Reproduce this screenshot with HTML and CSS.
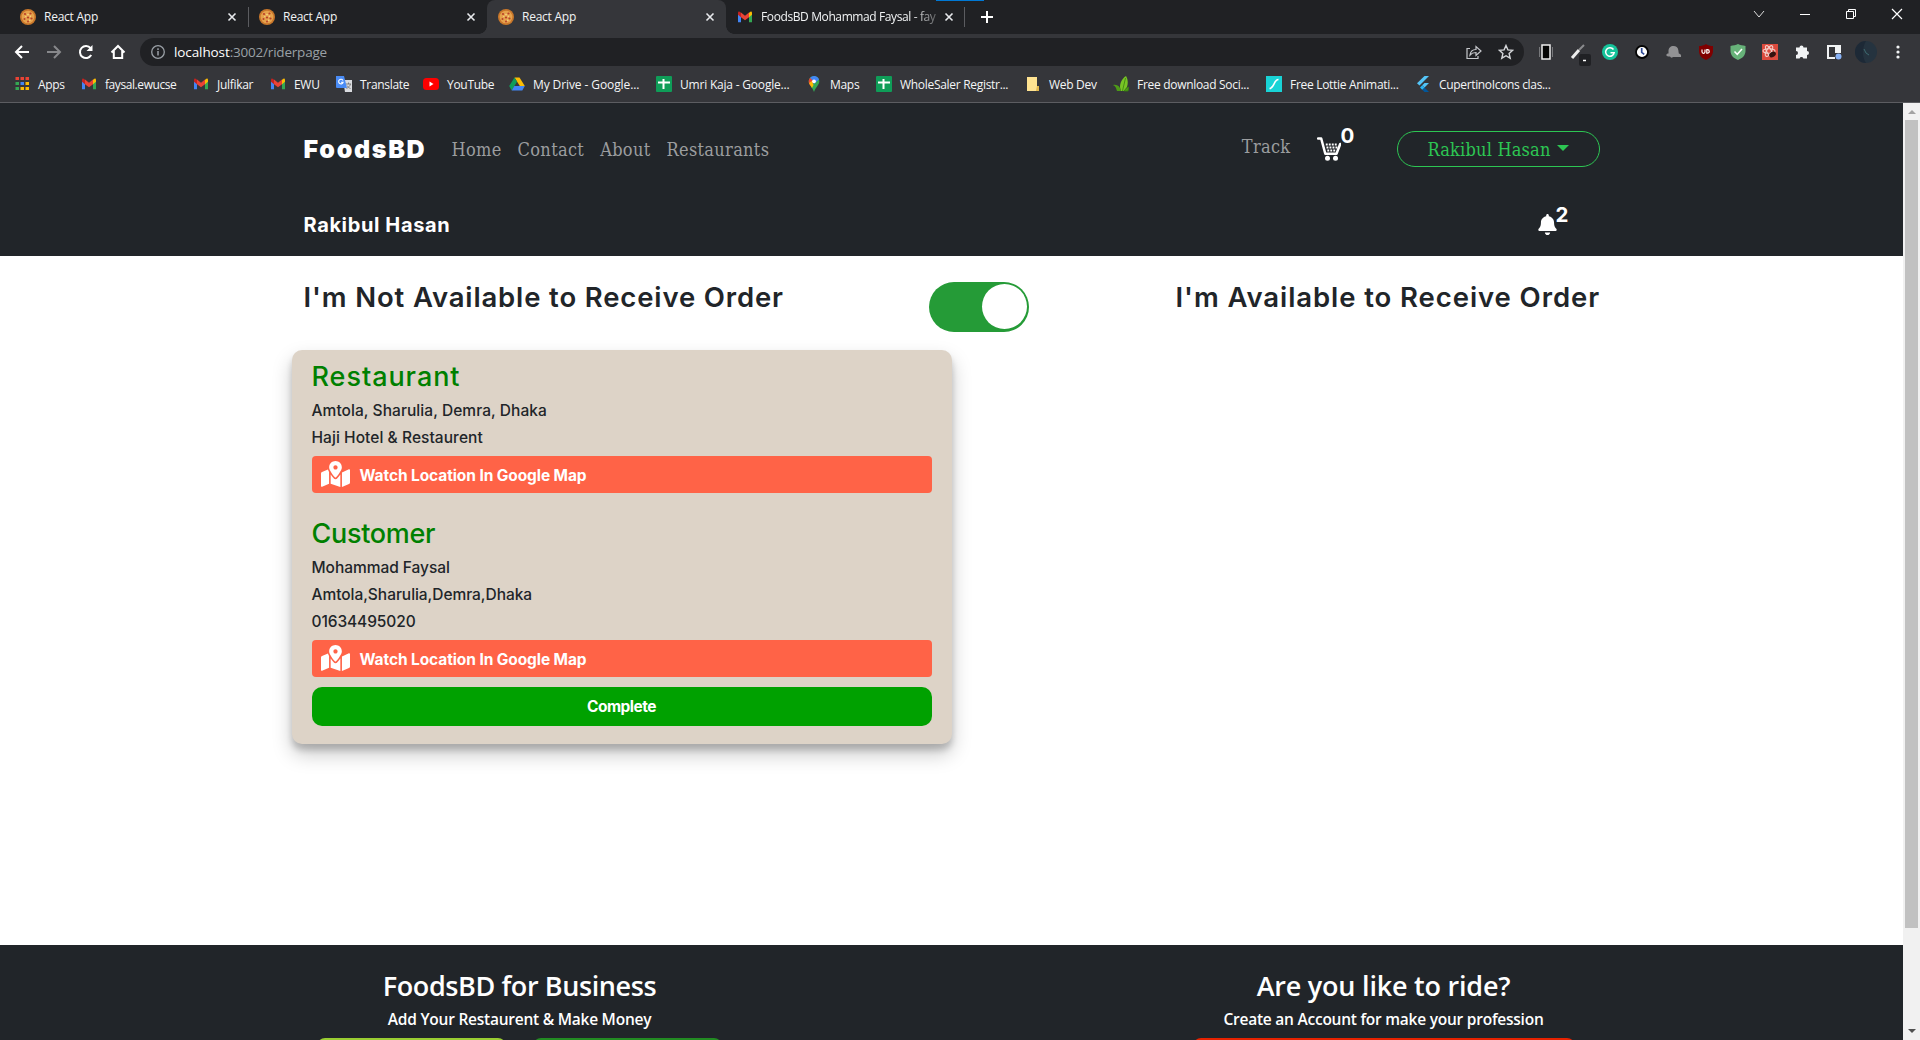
FILE: index.html
```html
<!DOCTYPE html>
<html lang="en">
<head>
<meta charset="utf-8">
<title>React App</title>
<link rel="stylesheet" href="styles.css">
</head>
<body>
<svg class="defs" aria-hidden="true">
  <defs>
    <symbol id="pizza" viewBox="0 0 16 16"><circle cx="8" cy="8" r="8" fill="#c9772b"/><circle cx="8" cy="8" r="6.3" fill="#e6a24c"/><g fill="#b8402a"><circle cx="5" cy="5" r="1.1"/><circle cx="10.5" cy="4.5" r="1.1"/><circle cx="8" cy="8.5" r="1.1"/><circle cx="4.5" cy="10" r="1"/><circle cx="11.5" cy="9.5" r="1.1"/><circle cx="8" cy="12.4" r="1"/></g><g fill="#f8d98a"><circle cx="8" cy="5.6" r=".8"/><circle cx="5.8" cy="7.6" r=".7"/><circle cx="10.3" cy="7.2" r=".7"/><circle cx="9.8" cy="11.2" r=".8"/></g></symbol>
    <symbol id="gmail" viewBox="0 0 16 16"><path d="M1 4v9.2h3V7z" fill="#4285f4"/><path d="M15 4v9.2h-3V7z" fill="#34a853"/><path d="M12 3.7 13.4 2.700Q15 2.300 15 4v1.700l-3 2.500z" fill="#fbbc04"/><path d="M4 3.700 2.600 2.700Q1 2.300 1 4v1.700l3 2.500z" fill="#c5221f"/><path d="M4 3.600 8 6.700l4-3.100v4.600l-4 3-4-3z" fill="#ea4335"/></symbol>
    <symbol id="sheet" viewBox="0 0 16 16"><rect width="16" height="16" rx="1" fill="#0f9d58"/><path d="M2 6.500h12M7.500 3v10" stroke="#fff" stroke-width="2"/></symbol>
    <symbol id="close" viewBox="0 0 10 10"><path d="m1.500 1.500 7 7m0-7-7 7" stroke="#e8eaed" stroke-width="1.600"/></symbol>
    <symbol id="map" viewBox="0 0 576 512"><path fill="currentColor" d="M288 0c-69.590 0-126 56.410-126 126 0 56.260 82.350 158.800 113.900 196.020 6.390 7.540 17.820 7.540 24.200 0C331.650 284.800 414 182.260 414 126 414 56.410 357.590 0 288 0zm0 168c-23.200 0-42-18.800-42-42s18.800-42 42-42 42 18.800 42 42-18.800 42-42 42zM20.120 215.950A32.006 32.006 0 0 0 0 245.660v250.320c0 11.320 11.430 19.060 21.940 14.860L160 448V214.920c-8.840-15.980-16.070-31.540-21.250-46.420L20.120 215.950zM288 359.670c-14.070 0-27.380-6.180-36.510-16.960-19.660-23.200-40.570-49.620-59.490-76.720v182l192 64V266c-18.920 27.090-39.820 53.520-59.490 76.720-9.130 10.770-22.440 16.950-36.510 16.950zm266.060-198.510L416 224v288l139.880-55.950A31.996 31.996 0 0 0 576 426.340V176.020c0-11.320-11.430-19.060-21.940-14.860z"/></symbol>
  </defs>
</svg>

<div class="tabstrip">
  <div class="tab"><svg class="fav"><use href="#pizza"/></svg><span class="title">React App</span><svg class="x"><use href="#close"/></svg></div>
  <div class="tab sep"><svg class="fav"><use href="#pizza"/></svg><span class="title">React App</span><svg class="x"><use href="#close"/></svg></div>
  <div class="tab active"><svg class="fav"><use href="#pizza"/></svg><span class="title">React App</span><svg class="x"><use href="#close"/></svg></div>
  <div class="tab mail"><svg class="fav"><use href="#gmail"/></svg><span class="title fade">FoodsBD Mohammad Faysal - fay</span><svg class="x"><use href="#close"/></svg></div>
  <div class="newtab"><svg width="14" height="14" viewBox="0 0 14 14"><path d="M7 1v12M1 7h12" stroke="#fff" stroke-width="2"/></svg></div>
  <div class="winctl">
    <svg viewBox="0 0 12 12"><path d="m1 3 5 6 5-6" fill="none" stroke="#ddd"/></svg>
    <svg viewBox="0 0 12 12"><path d="M1 6.500h10" stroke="#fff"/></svg>
    <svg viewBox="0 0 12 12"><path d="M1.500 3.500h7v7h-7zM3.500 3.500v-2h7v7h-2" fill="none" stroke="#fff"/></svg>
    <svg viewBox="0 0 12 12"><path d="m1 1 10 10M11 1 1 11" stroke="#fff" stroke-width="1.200"/></svg>
  </div>
  <div class="marker"></div>
</div>

<div class="toolbar">
  <div class="navbtns">
    <svg viewBox="0 0 16 16"><path d="M15 8H2m6-6L2 8l6 6" fill="none" stroke="#fff" stroke-width="2"/></svg>
    <svg viewBox="0 0 16 16"><path d="M1 8h13M8 2l6 6-6 6" fill="none" stroke="#87888b" stroke-width="2"/></svg>
    <svg viewBox="0 0 16 16"><path d="M13.200 11A6 6 0 1 1 12.600 4.200" fill="none" stroke="#fff" stroke-width="2"/><path d="M14.500 1v6h-6z" fill="#fff"/></svg>
    <svg viewBox="0 0 16 16"><path d="M1.500 8.500 8 2l6.500 6.500M3.800 7v7h8.400V7" fill="none" stroke="#fff" stroke-width="2"/></svg>
  </div>
  <div class="omnibox">
    <svg width="16" height="16" viewBox="0 0 16 16"><circle cx="8" cy="8" r="6.300" fill="none" stroke="#9aa0a6" stroke-width="1.300"/><path d="M8 7v4.500M8 4.300v1.600" stroke="#9aa0a6" stroke-width="1.500"/></svg>
    <span class="url"><b>localhost</b>:3002/riderpage</span>
    <svg class="share" width="16" height="16" viewBox="0 0 16 16" fill="none" stroke="#c6c8cc" stroke-width="1.200"><path d="M4 4.500H1v10h11V12M4 11c.5-4 3-5.500 6-5.500V2.500l5 4.500-5 4.500v-3C7.500 8.500 5.500 9.200 4 11z"/></svg>
    <svg width="16" height="16" viewBox="0 0 16 16"><path d="m8 1.500 1.900 4.400 4.800.4-3.600 3.200 1.100 4.700L8 11.700l-4.200 2.500 1.100-4.700L1.300 6.300l4.800-.4z" fill="none" stroke="#d5d7da" stroke-width="1.400"/></svg>
  </div>
  <div class="exts">
    <svg viewBox="0 0 16 16"><rect x="4" y="1" width="8" height="14" fill="#050505" stroke="#eee" stroke-width="1.500"/><path d="M1.500 3v10M14.500 3v10" stroke="#77787b"/></svg>
    <svg class="wand" viewBox="0 0 16 16"><path d="m2 14 7-8" stroke="#eee" stroke-width="3"/><path d="m9 6 5-5" stroke="#8b8c8e" stroke-width="2"/><rect x="9" y="10" width="12" height="12" rx="2" fill="#202124"/><path d="M13 16.500h3" stroke="#fff" stroke-width="1.500"/></svg>
    <svg viewBox="0 0 16 16"><circle cx="8" cy="8" r="8" fill="#15c39a"/><path d="M11.500 5.500a4.300 4.300 0 1 0 .7 3.200H8.500" fill="none" stroke="#fff" stroke-width="1.500"/></svg>
    <svg viewBox="0 0 16 16"><circle cx="8" cy="8" r="6" fill="#fff" stroke="#050505" stroke-width="1.800"/><path d="M7.700 4v4.300l2.500 2" fill="none" stroke="#314d9b" stroke-width="1.700"/></svg>
    <svg viewBox="0 0 16 16"><path d="M2.500 9.500V7c0-3 2-5 5-5 2.500 0 4.500 1.500 4.800 4l.5 3.500c2 .5 2.700 1.700 2.200 3.500H7c-1 1-2.500.8-3-.5-2 0-3.700-.5-3.700-1.500 0-.8 1-1.500 2.200-1.500z" fill="#929294"/></svg>
    <svg viewBox="0 0 16 16"><path d="M8 0c2 1.500 4.500 2 7 2v5c0 4.500-3 7.500-7 9-4-1.500-7-4.500-7-9V2c2.500 0 5-.5 7-2z" fill="#800000"/><path d="M4 5.500v2.300a1.500 1.500 0 0 0 3 0V5.500M8.800 5.700v3.500h.7a1.750 1.750 0 0 0 0-3.500z" fill="none" stroke="#fff" stroke-width="1.200"/></svg>
    <svg viewBox="0 0 16 16"><path d="M8 0c2 1 5 1.500 7.500 2v5c0 4.500-3.500 7.500-7.500 9-4-1.500-7.500-4.500-7.500-9V2C3 1.500 6 1 8 0z" fill="#67b279"/><path d="m4.500 7.500 2.700 2.800L12 5" fill="none" stroke="#fff" stroke-width="1.500"/></svg>
    <svg viewBox="0 0 16 16"><rect width="16" height="16" fill="#dc4b3e"/><g fill="none" stroke="#f5cfc9" stroke-width="1.100"><ellipse cx="7" cy="7" rx="6" ry="2.300"/><ellipse cx="7" cy="7" rx="6" ry="2.300" transform="rotate(60 7 7)"/><ellipse cx="7" cy="7" rx="6" ry="2.300" transform="rotate(120 7 7)"/></g><ellipse cx="10.500" cy="10.500" rx="3.600" ry="2.500" transform="rotate(-30 10.500 10.500)" fill="#35120f"/></svg>
    <svg viewBox="0 0 16 16"><path d="M2 3.500h3.500a2 2 0 1 1 4 0H13V7a2 2 0 1 1 0 4v3.500H9.300a1.900 1.900 0 0 0-3.700 0H2V11a2 2 0 0 0 0-4z" fill="#f1f3f4"/></svg>
    <svg viewBox="0 0 16 16"><path d="M2 2h12v12H2z" fill="none" stroke="#f1f3f4" stroke-width="2"/><path d="M9 2h5v8H9z" fill="#f1f3f4"/><path d="M9 9h6v6H9z" fill="#35363a"/><circle cx="12.500" cy="12.500" r="3" fill="#8ab4f8"/></svg>
    <svg class="avatar" viewBox="0 0 22 22"><circle cx="11" cy="11" r="11" fill="#25333f"/><path d="M11 0a11 11 0 0 0 0 22c-4-5-4-16 0-22z" fill="#1d2936"/><path d="m9 8 2 4 3 2" fill="none" stroke="#3d6a70"/></svg>
    <svg viewBox="0 0 16 16" fill="#f1f3f4"><circle cx="8" cy="3" r="1.600"/><circle cx="8" cy="8" r="1.600"/><circle cx="8" cy="13" r="1.600"/></svg>
  </div>
</div>

<div class="bookmarks">
  <div><svg viewBox="0 0 16 16"><path d="M1.500 1h3.500v3H1.500zm5 0H10v3H6.500zM11.500 1H15v3h-3.500z" fill="#ea4335"/><path d="M1.500 6H5v3H1.500zM1.500 11H5v3H1.500z" fill="#34a853"/><path d="M6.500 6H10v3H6.500z" fill="#4285f4"/><path d="M11.500 6H15v3h-3.500zM6.500 11H10v3H6.500zM11.500 11H15v3h-3.500z" fill="#fbbc04"/></svg>Apps</div>
  <div class="tight"><svg><use href="#gmail"/></svg>faysal.ewucse</div>
  <div><svg><use href="#gmail"/></svg>Julfikar</div>
  <div><svg><use href="#gmail"/></svg>EWU</div>
  <div><svg viewBox="0 0 16 16"><path d="M7 4h9v12H9z" fill="#dadce0"/><path d="M10 8h5m-2.500-1.500V8m2 0c-.5 2-2 3.500-4 4.500m.500-3c1 1.500 2 2.500 3.500 3" fill="none" stroke="#777" stroke-width=".9"/><path d="M0 0h8l3 12H1a1 1 0 0 1-1-1z" fill="#4a8cf5"/><path d="M7 4.500A2.300 2.300 0 1 0 7.200 6.200H5" fill="none" stroke="#fff" stroke-width="1.100"/></svg>Translate</div>
  <div><svg viewBox="0 0 16 16"><rect y="2" width="16" height="12" rx="3.500" fill="#f00"/><path d="m6.500 5.500 4 2.500-4 2.500z" fill="#fff"/></svg>YouTube</div>
  <div class="loose"><svg viewBox="0 0 16 16"><path d="M5.500 1.500h5L15.800 10h-5z" fill="#fbbc04"/><path d="M5.500 1.500 8 5.700 2.700 14.500.2 10z" fill="#0f9d58"/><path d="M5.300 10h10.500l-2.500 4.500H2.700z" fill="#4285f4"/></svg>My Drive - Google...</div>
  <div class="umri"><svg><use href="#sheet"/></svg>Umri Kaja - Google...</div>
  <div><svg viewBox="0 0 16 16"><path d="M8 0a5.300 5.300 0 0 1 5.300 5.300C13.300 9 10 10.500 8 16 6 10.500 2.700 9 2.700 5.300A5.300 5.300 0 0 1 8 0z" fill="#34a853"/><path d="M8 0a5.300 5.300 0 0 1 5 3.500L8 8 4 2C5 .700 6.500 0 8 0z" fill="#4285f4"/><path d="M4 2 8 5.500 4.500 10C3.400 8.600 2.700 7.400 2.700 5.300 2.700 4 3.200 2.900 4 2z" fill="#ea4335"/><path d="m3 7 3-2 1.500 4L6 12z" fill="#fbbc04"/><circle cx="8" cy="5.300" r="1.900" fill="#fff"/></svg>Maps</div>
  <div><svg><use href="#sheet"/></svg>WholeSaler Registr...</div>
  <div><svg viewBox="0 0 16 16"><path d="M2 1h10v9l2 2v3H2z" fill="#ffe391"/><path d="M12 10h2v5h-3z" fill="#e3b94f"/></svg>Web Dev</div>
  <div><svg viewBox="0 0 16 16"><path d="M13 0c3 5 2 12-2 15H8C5.500 10 8 3 13 0z" fill="#78c425"/><path d="M0 9c4-1 7 1 8 6H4C3 11 2 10 0 9z" fill="#4d9a17"/><path d="M12.500 2 9.500 15M16 11c-2 .5-4 2-5 4h4z" stroke="#397d10" fill="#4d9a17" stroke-width=".8"/></svg>Free download Soci...</div>
  <div><svg viewBox="0 0 16 16"><rect width="16" height="16" fill="#19d3d6"/><path d="M3.500 12.500C8.500 12.500 7.500 3.500 12.500 3.500" fill="none" stroke="#fff" stroke-width="1.700"/></svg>Free Lottie Animati...</div>
  <div class="cupertino"><svg viewBox="0 0 16 16"><path d="M9.500 0H14L4.500 9.500 2 7.300z" fill="#54c5f8"/><path d="M9.500 7H14l-4.500 4.500L7.200 9.200z" fill="#54c5f8"/><path d="m7.200 13.800 2.300-2.300L14 16H9.500z" fill="#01579b"/><path d="m5 11.500 2.200-2.300 2.300 2.300-2.300 2.300z" fill="#29b6f6"/></svg>CupertinoIcons clas...</div>
</div>

<div class="viewport">
  <div class="page">
    <header>
      <div class="container mainnav">
        <span class="brand">FoodsBD</span>
        <nav><a>Home</a><a>Contact</a><a>About</a><a>Restaurants</a></nav>
        <a class="track">Track</a>
        <span class="cart">
          <svg width="24" height="24" viewBox="0 0 24 24"><path d="M1 1.500h3.200L8.300 16.800h11.200L23.200 7" fill="none" stroke="#fff" stroke-width="2.500" stroke-linecap="round" stroke-linejoin="round"/><path d="M8.800 7.500h12M9.500 10.500h11M10.300 13.500h9" stroke="#fff" stroke-width="1.800" stroke-dasharray="1.900 1.100"/><circle cx="10.500" cy="21.200" r="2.500" fill="#fff"/><circle cx="18.500" cy="21.200" r="2.500" fill="#fff"/></svg>
          <span class="count">0</span>
        </span>
        <button class="user">Rakibul Hasan<i></i></button>
      </div>
      <div class="container rider">
        <span class="name">Rakibul Hasan</span>
        <span class="bell">
          <svg width="19" height="21" viewBox="0 0 448 512"><path fill="#fff" d="M224 512c35.320 0 63.970-28.650 63.970-64H160.030c0 35.350 28.650 64 63.970 64zm215.390-149.710c-19.320-20.760-55.470-51.990-55.470-154.290 0-77.700-54.480-139.900-127.940-155.160V32c0-17.670-14.320-32-31.980-32s-31.980 14.330-31.980 32v20.840C118.560 68.100 64.080 130.300 64.080 208c0 102.300-36.150 133.530-55.470 154.290-6 6.450-8.660 14.160-8.610 21.710.11 16.400 12.980 32 32.100 32h383.800c19.120 0 32-15.600 32.100-32 .05-7.550-2.610-15.270-8.610-21.710z"/></svg>
          <span class="count">2</span>
        </span>
      </div>
    </header>

    <main class="container">
      <div class="status">
        <h2>I'm Not Available to Receive Order</h2>
        <span class="switch"></span>
        <h2 class="on">I'm Available to Receive Order</h2>
      </div>
      <section class="card">
        <h3 class="rest">Restaurant</h3>
        <p>Amtola, Sharulia, Demra, Dhaka</p>
        <p>Haji Hotel &amp; Restaurent</p>
        <a class="mapbtn"><svg><use href="#map"/></svg>Watch Location In Google Map</a>
        <h3 class="cust">Customer</h3>
        <p class="snug">Mohammad Faysal</p>
        <p class="snug">Amtola,Sharulia,Demra,Dhaka</p>
        <p class="phone">01634495020</p>
        <a class="mapbtn"><svg><use href="#map"/></svg>Watch Location In Google Map</a>
        <button class="complete">Complete</button>
      </section>
    </main>

    <footer>
      <div class="container foot">
        <div class="col">
          <h4 class="biz">FoodsBD for Business</h4>
          <p>Add Your Restaurent &amp; Make Money</p>
          <div class="actions"><span class="lime"></span><span class="forest"></span></div>
        </div>
        <div class="col">
          <h4>Are you like to ride?</h4>
          <p>Create an Account for make your profession</p>
          <div class="actions"><span class="red"></span></div>
        </div>
      </div>
    </footer>
  </div>
  <div class="scrollbar"><i class="up"></i><i class="thumb"></i><i class="down"></i></div>
</div>
</body>
</html>
```
FILE: styles.css
```css
* { box-sizing: border-box; }
body {
  margin: 0;
  width: 1920px;
  height: 1040px;
  overflow: hidden;
  display: flex;
  flex-direction: column;
  background: #202124;
  font-family: "Open Sans", sans-serif;
}
.defs { position: absolute; width: 0; height: 0; }
h2, h3, h4, p { margin: 0; }
svg { flex: none; display: block; }

/* tab strip */
.tabstrip {
  position: relative;
  height: 34px;
  flex: none;
  display: flex;
  padding-left: 9px;
  background: #202124;
  color: #f1f3f4;
  font-size: 12px;
  letter-spacing: -0.24px;
}
.tab {
  width: 239px;
  height: 34px;
  display: flex;
  align-items: center;
  padding: 0 11px 1px 11px;
  position: relative;
}
.tab .fav { width: 16px; height: 16px; }
.tab .x { width: 10px; height: 10px; }
.tab .title { flex: 1; margin: 0 8px; white-space: nowrap; }
.tab .fade { letter-spacing: -0.39px; margin-right: 4px; mask-image: linear-gradient(90deg, #000 84%, rgba(0, 0, 0, .2) 100%); }
.tab.sep::before, .newtab::before {
  content: "";
  position: absolute;
  left: 0;
  top: 7px;
  width: 1px;
  height: 20px;
  background: #5b5c60;
}
.newtab::before { left: -1px; }
.tab.active { background: #35363a; border-radius: 8px 8px 0 0; }
.tab.active::before, .tab.active::after {
  content: "";
  position: absolute;
  bottom: 0;
  width: 8px;
  height: 8px;
}
.tab.active::before { left: -8px; background: radial-gradient(circle at 0 0, #202124 7.5px, #35363a 8px); }
.tab.active::after { right: -8px; background: radial-gradient(circle at 100% 0, #202124 7.5px, #35363a 8px); }
.newtab { position: relative; padding: 10px 0 0 15px; }
.winctl { margin-left: auto; display: flex; gap: 34px; padding: 8px 17px 0 0; }
.winctl svg { width: 12px; height: 12px; }
.marker { position: absolute; left: 936px; top: 0; width: 48px; height: 1px; background: #0078d4; }

/* toolbar */
.toolbar { height: 36px; flex: none; display: flex; align-items: center; background: #35363a; }
.navbtns { display: flex; gap: 16px; width: 140px; padding-left: 14px; }
.navbtns svg { width: 16px; height: 16px; }
.omnibox {
  width: 1384px;
  height: 28px;
  border-radius: 14px;
  background: #202124;
  display: flex;
  align-items: center;
  gap: 8px;
  padding: 0 10px;
}
.url { font-size: 13.5px; letter-spacing: -0.2px; color: #9aa0a6; }
.url b { font-weight: 400; color: #fff; letter-spacing: -0.1px; }
.share { margin: 0 8px 0 auto; }
.exts { display: flex; align-items: center; gap: 16px; padding-left: 14px; }
.exts svg { width: 16px; height: 16px; overflow: visible; }
.exts .avatar { width: 22px; height: 22px; margin: 0 -3px; }

/* bookmarks */
.bookmarks {
  height: 33px;
  flex: none;
  display: grid;
  grid-template-columns: 67px 112px 77px 66px 87px 86px 147px 150px 70px 149px 88px 153px 149px 150px;
  padding: 0 0 4px 14px;
  background: #35363a;
  border-bottom: 1px solid #5c5d61;
  color: #f4f5f6;
  font-size: 12px;
  letter-spacing: -0.3px;
}
.bookmarks div { display: flex; align-items: center; gap: 8px; white-space: nowrap; }
.bookmarks svg { width: 16px; height: 16px; }
.bookmarks .tight { letter-spacing: -0.42px; }
.bookmarks .loose { letter-spacing: -0.1px; }
.bookmarks .umri { letter-spacing: -0.2px; }
.bookmarks .cupertino { letter-spacing: -0.34px; }

/* page */
.viewport { flex: 1; min-height: 0; display: flex; }
.page { width: 1903px; background: #fff; display: flex; flex-direction: column; overflow: hidden; color: #212529; font-family: Inter, sans-serif; }
.container { width: 1320px; margin: 0 auto; padding: 0 12px; }
header { height: 153px; flex: none; background: #212529; color: #fff; }
.mainnav { height: 92px; display: flex; align-items: center; font: 18px/28px "DejaVu Serif Condensed", "DejaVu Serif", serif; letter-spacing: 0.32px; color: #9b9d9f; }
.brand { width: 148px; font: 900 25px/30px Inter, sans-serif; letter-spacing: 1.7px; color: #fff; }
nav { display: flex; gap: 16px; padding-top: 2px; }
.track { margin: -4px 26px 0 auto; }
.cart { display: flex; align-items: flex-start; margin-right: 43px; height: 42px; padding-top: 9px; }
.count { font: 700 20.5px/22px Inter, sans-serif; letter-spacing: 0; color: #fff; }
.cart .count { margin: -12px 0 0 0; width: 13px; }
.user {
  width: 203px;
  height: 36px;
  display: flex;
  align-items: center;
  justify-content: center;
  gap: 6px;
  padding: 2px 0 0;
  background: none;
  border: 1px solid #2dc653;
  border-radius: 18px;
  color: #2dc653;
  font: inherit;
  letter-spacing: 0.2px;
}
.user i { border: 6px solid transparent; border-top-color: #2dc653; border-bottom: 0; margin-top: -5px; }
.rider { height: 61px; padding-bottom: 2px; display: flex; justify-content: space-between; align-items: center; }
.name { font-size: 20px; font-weight: 700; letter-spacing: 0.62px; }
.bell { display: flex; margin-right: 31px; }
.bell .count { margin: -10px 0 0 -1px; }

.status { height: 94px; display: flex; justify-content: space-between; padding-top: 24px; }
.status h2 { font-size: 27.5px; line-height: 35px; font-weight: 600; letter-spacing: 0.86px; width: 480px; white-space: nowrap; }
.status .on { width: 424px; letter-spacing: 0.92px; }
.switch { width: 100px; height: 50px; margin: 2px 20px 0 0; border-radius: 25px; background: #259b37; padding: 2px; display: flex; justify-content: flex-end; margin-left: 18px; }
.switch::after { content: ""; width: 45px; height: 45px; border-radius: 50%; background: #fff; }

.card {
  width: 660px;
  height: 394px;
  margin-left: -12px;
  padding: 10px 20px 0;
  border-radius: 10px;
  background: #ddd3c7;
  box-shadow: 0 10px 20px rgba(0, 0, 0, .22), 0 6px 6px rgba(0, 0, 0, .18);
  display: flex;
  flex-direction: column;
}
.card h3 { font-size: 27px; line-height: 34px; font-weight: 500; color: #008000; margin-bottom: 3px; }
.card .rest { letter-spacing: 0.95px; }
.card .cust { margin-top: 24px; letter-spacing: -0.3px; }
.card p { font-size: 15.5px; line-height: 27.33px; font-weight: 500; letter-spacing: 0.06px; }
.card .snug { letter-spacing: -0.04px; }
.card .phone { letter-spacing: -0.1px; }
.mapbtn {
  height: 37px;
  margin-top: 4px;
  padding: 2px 9px 0;
  border-radius: 4px;
  background: #ff6347;
  color: #fff;
  display: flex;
  align-items: center;
  gap: 10px;
  font-size: 15.5px;
  font-weight: 700;
  letter-spacing: -0.1px;
}
.mapbtn svg { width: 29px; height: 26px; margin-top: -2px; }
.complete {
  height: 39px;
  margin-top: 10px;
  border: 0;
  border-radius: 10px;
  background: #00a100;
  color: #fff;
  font: 700 15.5px Inter, sans-serif;
  letter-spacing: -0.5px;
}

footer { margin-top: auto; height: 95px; flex: none; background: #212529; color: #fff; font-family: "Open Sans", sans-serif; overflow: hidden; }
.foot { display: flex; justify-content: space-between; padding-top: 24px; }
.col { width: 432px; display: flex; flex-direction: column; align-items: center; }
.col h4 { font-size: 27px; line-height: 34px; font-weight: 600; letter-spacing: -0.22px; }
.col .biz { letter-spacing: -0.4px; }
.col p { font-size: 15.5px; line-height: 24px; margin-top: 4px; font-weight: 600; letter-spacing: -0.24px; white-space: nowrap; }
.actions { display: flex; gap: 27px; margin-top: 7px; }
.actions span { width: 189px; height: 38px; border-radius: 8px; }
.actions .lime { background: #9acd32; }
.actions .forest { background: #228b22; }
.actions .red { width: 382px; background: #e62200; }

/* page scrollbar */
.scrollbar { width: 17px; background: #f1f1f1; display: flex; flex-direction: column; align-items: center; padding: 7px 0; }
.scrollbar .up { border: 4px solid transparent; border-bottom-color: #a3a3a3; border-top: 0; }
.scrollbar .thumb { width: 13px; height: 808px; margin-top: 6px; background: #c1c1c1; }
.scrollbar .down { margin-top: auto; border: 4px solid transparent; border-top-color: #505050; border-bottom: 0; }
```
